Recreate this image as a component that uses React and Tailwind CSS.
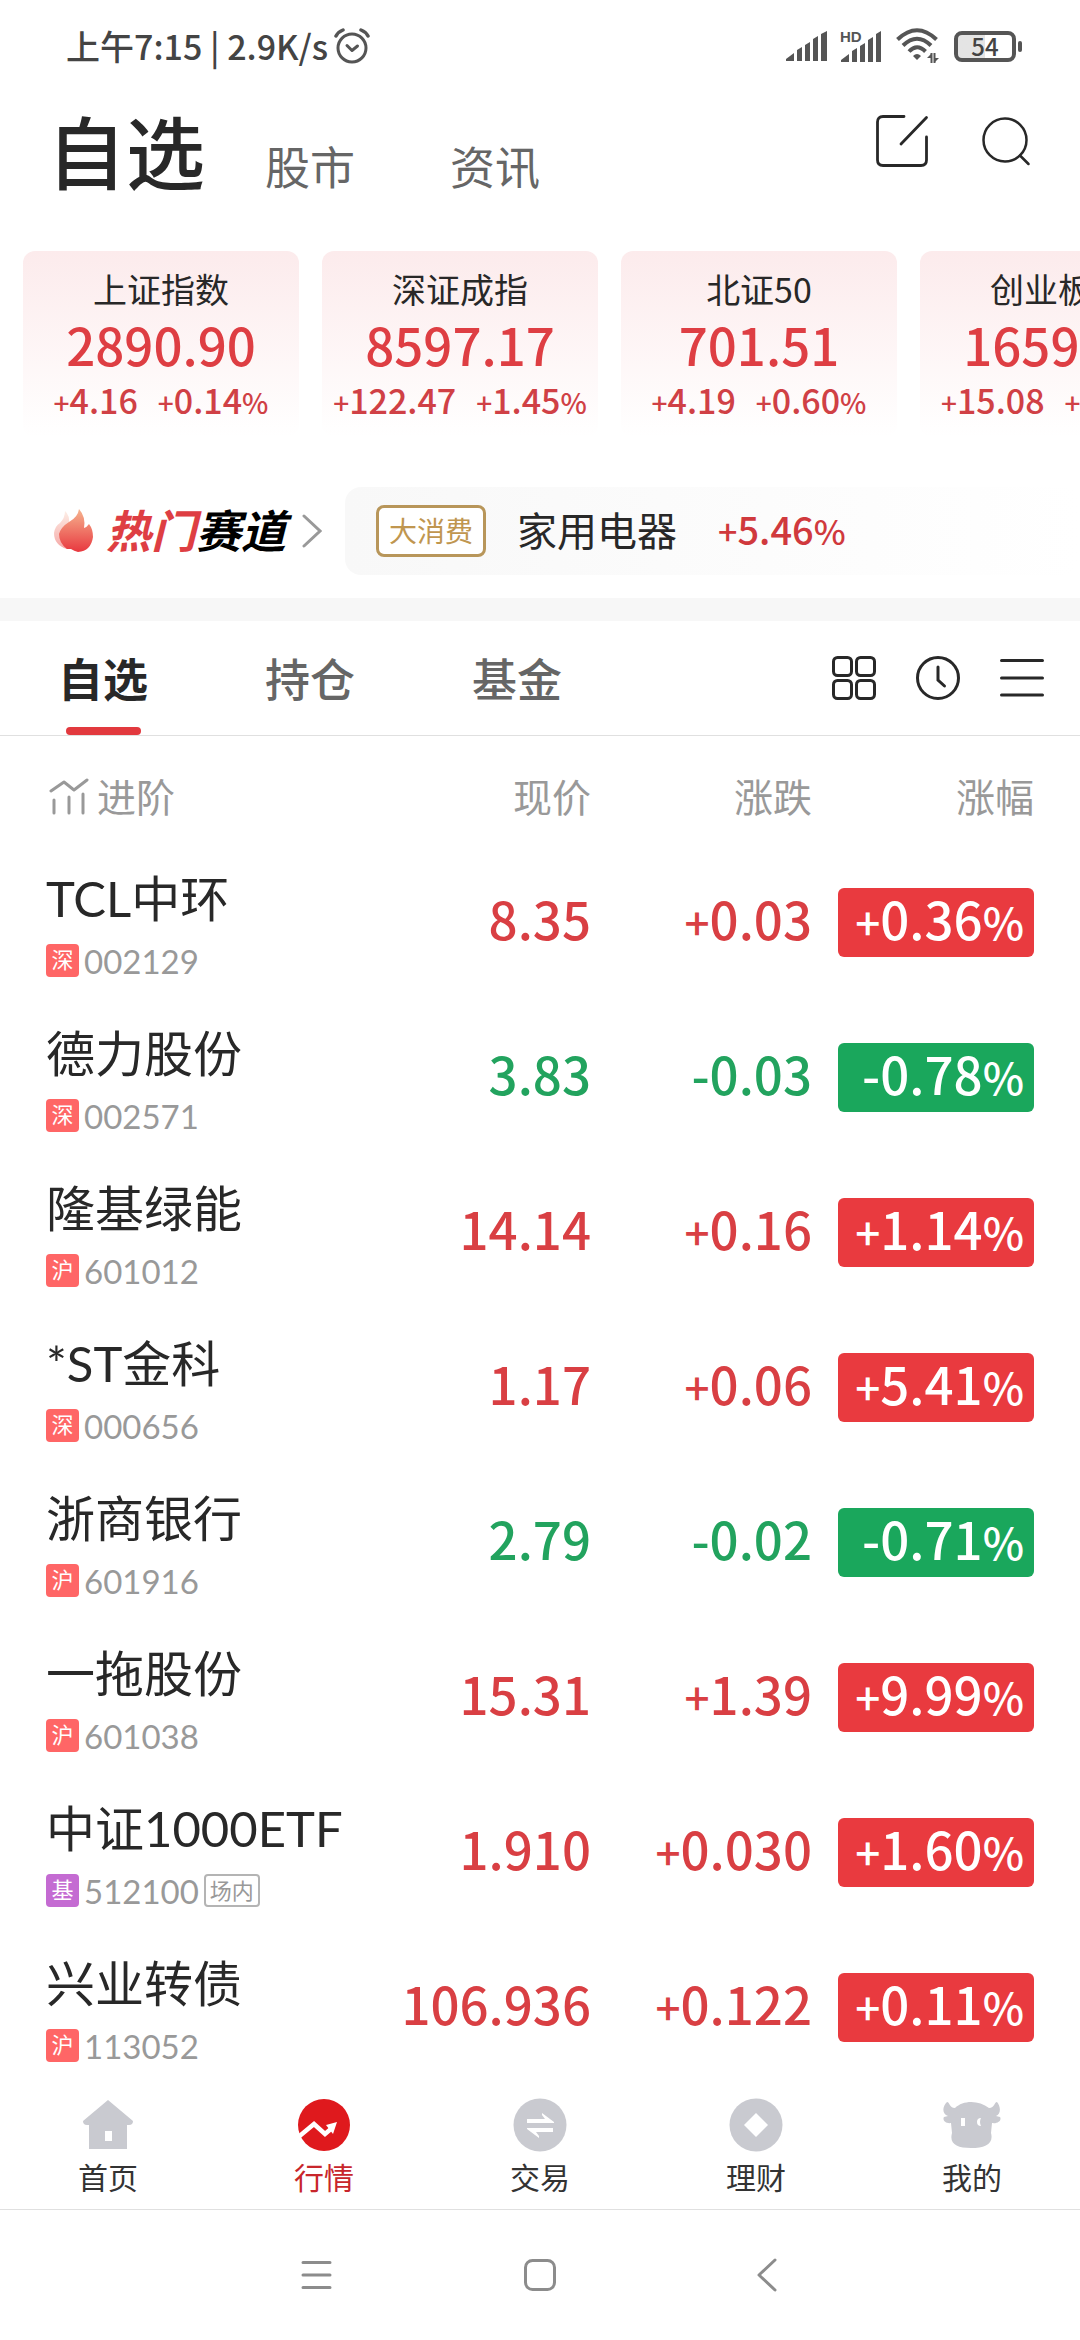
const indices = [
  { name: "上证指数", price: "2890.90", change: "+4.16", pct: "+0.14%" },
  { name: "深证成指", price: "8597.17", change: "+122.47", pct: "+1.45%" },
  { name: "北证50", price: "701.51", change: "+4.19", pct: "+0.60%" },
  { name: "创业板指", price: "1659.21", change: "+15.08", pct: "+0.92%" },
];

const stocks = [
  { name: "TCL中环", market: "深", code: "002129", price: "8.35", change: "+0.03", pct: "+0.36%" },
  { name: "德力股份", market: "深", code: "002571", price: "3.83", change: "-0.03", pct: "-0.78%" },
  { name: "隆基绿能", market: "沪", code: "601012", price: "14.14", change: "+0.16", pct: "+1.14%" },
  { name: "*ST金科", market: "深", code: "000656", price: "1.17", change: "+0.06", pct: "+5.41%" },
  { name: "浙商银行", market: "沪", code: "601916", price: "2.79", change: "-0.02", pct: "-0.71%" },
  { name: "一拖股份", market: "沪", code: "601038", price: "15.31", change: "+1.39", pct: "+9.99%" },
  { name: "中证1000ETF", market: "基", code: "512100", tag: "场内", price: "1.910", change: "+0.030", pct: "+1.60%" },
  { name: "兴业转债", market: "沪", code: "113052", price: "106.936", change: "+0.122", pct: "+0.11%" },
];

/* Draws the sign and the percent mark a step smaller than the digits. */
function Figure({ value, small }) {
  const sign = value.startsWith("+") ? "+" : "";
  const percent = value.endsWith("%") ? "%" : "";
  const digits = value.replace("+", "").replace("%", "");
  return (
    <>
      {sign && <span className={small}>{sign}</span>}
      {digits}
      {percent && <span className={small}>{percent}</span>}
    </>
  );
}

function StatusBar() {
  return (
    <div className="flex h-24 items-center justify-between pr-[58px] pb-1 pl-[66px] text-[#444]">
      <div className="flex items-center gap-[6px] text-[34px] leading-none font-medium [font-family:'Noto_Sans_CJK_SC',sans-serif]">
        <span>上午7:15 | 2.9K/s</span>
        <svg width="36" height="36" viewBox="0 0 36 36" fill="none" stroke="#555" strokeWidth="3" strokeLinecap="round" strokeLinejoin="round">
          <circle cx="18" cy="20" r="14" />
          <path d="M13 17.500l5 5 5.500-4.500" />
          <path d="M2 8q2-4 7-6M34 8q-2-4-7-6" strokeWidth="3.500" />
        </svg>
      </div>
      <div className="flex items-center">
        <svg width="42" height="30" viewBox="0 0 42 30" fill="#555">
          <path d="M0 30v-2l8-6v8zM11 30V19l5-3v14zM19 30V14l5-3v19zM27 30V8l5-3v25zM35 30V3l6-3v30z" />
        </svg>
        <svg className="ml-3 overflow-visible" width="42" height="32" viewBox="0 0 42 32" fill="#555">
          <path d="M1 32v-2l8-6v8zM12 32V21l5-3v14zM20 32V16l5-3v19zM28 32V10l5-3v25zM36 32V4l5-3v31z" />
          <text x="0" y="12" fontSize="15" fontWeight="bold" fontFamily="Liberation Sans">HD</text>
        </svg>
        <svg className="ml-[14px]" width="46" height="36" viewBox="0 0 46 36" fill="none" stroke="#555" strokeWidth="4">
          <path d="M1.500 11.500Q21 -7 40.500 11.500M7 17.500Q21 4 35 17.500M13 23.500Q21 15 29.500 23.500" />
          <path d="M17 28q4-4 8 0l-4 4z" fill="#555" stroke="none" />
          <path d="M35.500 25v10M38.500 25v10" strokeWidth="2" />
          <path d="M31 30l4-4v4zM43 30l-4 4v-4z" fill="#555" stroke="none" />
        </svg>
        <div className="ml-3 flex items-center gap-[2px]">
          <div className="flex h-[31px] w-[62px] items-center justify-center rounded-[8px] border-4 border-[#555] bg-linear-to-r from-[#e4e4e4] from-50% to-white to-50% text-[24px] leading-none font-medium [font-family:'Noto_Sans_CJK_SC',sans-serif]">
            54
          </div>
          <div className="h-[11px] w-1 rounded-sm bg-[#555]" />
        </div>
      </div>
    </div>
  );
}

function Header() {
  return (
    <header className="flex h-[155px] items-start justify-between pr-[49px] pl-[47px]">
      <nav className="flex items-end">
        <button className="text-[79px] leading-[116px] font-medium text-[#282828]">自选</button>
        <button className="ml-[60px] text-[45px] leading-[88px] text-[#666]">股市</button>
        <button className="ml-[95px] text-[45px] leading-[88px] text-[#666]">资讯</button>
      </nav>
      <div className="mt-[18px] flex items-center gap-[52px]">
        <button aria-label="编辑">
          <svg width="54" height="54" viewBox="0 0 54 54" fill="none" stroke="#282828" strokeWidth="2.800" strokeLinecap="round">
            <path d="M29 2.500H8Q2.500 2.500 2.500 8V46Q2.500 51.500 8 51.500H46Q51.500 51.500 51.500 46V23" />
            <path d="M26 30L51.500 3.500" />
          </svg>
        </button>
        <button aria-label="搜索">
          <svg width="50" height="50" viewBox="0 0 50 50" fill="none" stroke="#282828" strokeWidth="2.500" strokeLinecap="round">
            <circle cx="24" cy="24" r="21.500" />
            <path d="M39 39.500l8.500 8.500" />
          </svg>
        </button>
      </div>
    </header>
  );
}

function IndexStrip() {
  return (
    <section className="flex gap-[23px] overflow-x-auto pl-[23px] [scrollbar-width:none]">
      {indices.map((item) => (
        <article
          key={item.name}
          className="flex h-[186px] w-[276px] shrink-0 flex-col items-center rounded-xl bg-linear-to-b from-[#fcebec] to-white pt-4 font-medium whitespace-nowrap [font-family:'Noto_Sans_CJK_SC',sans-serif]"
        >
          <h2 className="text-[34px] leading-[44px] font-normal text-[#282828]">{item.name}</h2>
          <p className="mb-[2px] text-[51px] leading-[67px] text-[#de3e43]">{item.price}</p>
          <p className="flex gap-5 text-[34px] leading-[40px] text-[#d04045]">
            <span><Figure value={item.change} small="text-[28px] leading-none" /></span>
            <span><Figure value={item.pct} small="text-[28px] leading-none" /></span>
          </p>
        </article>
      ))}
    </section>
  );
}

function HotTrack() {
  return (
    <section className="mt-[50px] flex items-center pb-[23px] pl-[52px]">
      <a href="#hot" className="flex items-center">
        <svg width="42" height="44" viewBox="0 0 42 44">
          <defs>
            <linearGradient id="flame" x1="0" y1="0" x2="0" y2="1">
              <stop offset="0" stopColor="#f6b48f" />
              <stop offset="1" stopColor="#e8383f" />
            </linearGradient>
            <linearGradient id="flameBack" x1="0" y1="0" x2="0" y2="1">
              <stop offset="0" stopColor="#fdeee6" />
              <stop offset="1" stopColor="#f5a8a6" />
            </linearGradient>
          </defs>
          <path d="M13 2Q18 6 17 16L15 40Q2 36 2 24Q3 17 8 14Q13 9 13 2Z" fill="url(#flameBack)" />
          <path d="M27 0Q34 8 32 19Q35 18 37 15Q41 20 41 28Q39 42 26 43Q22 42 19 40L15 40Q7 34 7 25Q9 18 17 13Q26 8 27 0Z" fill="url(#flame)" />
        </svg>
        <strong className="ml-3 text-[45px] leading-[60px] font-bold text-[#de3e43] italic">
          热门<span className="text-black">赛道</span>
        </strong>
        <svg className="ml-4" width="20" height="34" viewBox="0 0 20 34" fill="none" stroke="#999" strokeWidth="3" strokeLinecap="round">
          <path d="M2 2l16 15L2 32" />
        </svg>
      </a>
      <a
        href="#appliances"
        className="ml-[23px] flex h-[88px] flex-1 items-center rounded-2xl bg-linear-to-r from-[#f8f8f8] to-white pl-[31px]"
      >
        <span className="rounded-[8px] border-3 border-[#b8965a] bg-white px-[10px] text-[28px] leading-[46px] text-[#c0964f]">大消费</span>
        <span className="ml-[31px] text-[40px] leading-none text-[#282828]">家用电器</span>
        <span className="ml-[41px] pb-1 text-[38px] leading-none font-medium text-[#d0393d] [font-family:'Noto_Sans_CJK_SC',sans-serif]">
          <Figure value="+5.46%" small="text-[34px]" />
        </span>
      </a>
    </section>
  );
}

function ListTabs() {
  return (
    <div className="flex h-[115px] items-center justify-between border-b border-[#e0e0e0] pr-[35px] pl-[58px]">
      <div className="flex h-full gap-[117px] text-[45px] font-medium text-[#666]">
        <button className="flex h-full flex-col items-center font-bold text-[#282828]">
          <span className="min-h-0 flex-1 leading-[119px]">自选</span>
          <span className="h-2 w-[75px] rounded-full bg-[#e2393e]" />
        </button>
        <button className="leading-[119px]">持仓</button>
        <button className="leading-[119px]">基金</button>
      </div>
      <div className="flex items-center gap-[38px]">
        <button aria-label="宫格">
          <svg width="46" height="46" viewBox="0 0 46 46" fill="none" stroke="#282828" strokeWidth="3">
            <rect x="2.500" y="2.500" width="18" height="18" rx="4" />
            <rect x="25.500" y="2.500" width="18" height="18" rx="4" />
            <rect x="2.500" y="25.500" width="18" height="18" rx="4" />
            <rect x="25.500" y="25.500" width="18" height="18" rx="4" />
          </svg>
        </button>
        <button aria-label="历史">
          <svg width="46" height="46" viewBox="0 0 46 46" fill="none" stroke="#282828" strokeWidth="3" strokeLinecap="round">
            <circle cx="23" cy="23" r="20.500" />
            <path d="M23 12v13l6.500 6" />
          </svg>
        </button>
        <button aria-label="菜单">
          <svg width="46" height="46" viewBox="0 0 46 46" fill="none" stroke="#282828" strokeWidth="3" strokeLinecap="round">
            <path d="M2.500 5.500h41M2.500 23h41M2.500 40h41" />
          </svg>
        </button>
      </div>
    </div>
  );
}

function StockRow({ stock }) {
  const down = stock.change.startsWith("-");
  const tone = down ? "text-[#22a35e]" : "text-[#d93f43]";
  return (
    <tr className="h-[155px] text-[51px] leading-[61px] font-medium [font-family:'Noto_Sans_CJK_SC',sans-serif]">
      <th scope="row" className="p-0 text-left font-normal [font-family:Lato,'Noto_Sans_CJK_SC',sans-serif]">
        <div className="text-[49px] leading-[64px] whitespace-nowrap text-[#282828]">{stock.name}</div>
        <div className="mt-[14px] mb-[2px] flex items-center gap-[5px]">
          <span
            className={
              stock.market === "基"
                ? "size-[33px] rounded-[4px] bg-[#c46bd2] text-center text-[22px] leading-[32px] text-white"
                : "size-[33px] rounded-[4px] bg-[#ff6666] text-center text-[22px] leading-[32px] text-white"
            }
          >
            {stock.market}
          </span>
          <span className="text-[33px] leading-[34px] text-[#999]">{stock.code}</span>
          {stock.tag && (
            <span className="rounded-[4px] border-2 border-[#b4b4b4] px-1 text-[22px] leading-[29px] text-[#999]">{stock.tag}</span>
          )}
        </div>
      </th>
      <td className={`px-0 pt-0 pb-2 text-right ${tone}`}>{stock.price}</td>
      <td className={`px-0 pt-0 pb-2 text-right ${tone}`}>
        <Figure value={stock.change} small="text-[44px] leading-none" />
      </td>
      <td className="p-0">
        <div
          className={
            down
              ? "ml-auto w-[196px] rounded-[6px] bg-[#1aa75c] pr-[10px] pb-2 text-right text-white"
              : "ml-auto w-[196px] rounded-[6px] bg-[#e93a3f] pr-[10px] pb-2 text-right text-white"
          }
        >
          <Figure value={stock.pct} small="text-[44px] leading-none" />
        </div>
      </td>
    </tr>
  );
}

function StockTable() {
  return (
    <div className="px-[46px]">
      <table className="w-full table-fixed border-collapse">
        <colgroup>
          <col />
          <col className="w-[218px]" />
          <col className="w-[221px]" />
          <col className="w-[222px]" />
        </colgroup>
        <thead>
          <tr className="h-[109px] text-[39px] leading-[44px] text-[#999]">
            <th scope="col" className="px-0 pt-3 pb-0 text-left font-normal">
              <button className="flex items-center gap-2">
                <svg className="ml-[3px]" width="40" height="40" viewBox="0 0 40 40" fill="none" stroke="#999" strokeWidth="3" strokeLinecap="round" strokeLinejoin="round">
                  <path d="M2 14L15 5l10 8L38 3M5 23v13M20 20v16M34 17v19" />
                </svg>
                进阶
              </button>
            </th>
            <th scope="col" className="px-0 pt-3 pb-0 text-right font-normal">现价</th>
            <th scope="col" className="px-0 pt-3 pb-0 text-right font-normal">涨跌</th>
            <th scope="col" className="px-0 pt-3 pb-0 text-right font-normal">涨幅</th>
          </tr>
        </thead>
        <tbody>
          {stocks.map((stock) => (
            <StockRow key={stock.code} stock={stock} />
          ))}
        </tbody>
      </table>
    </div>
  );
}

const navItems = [
  {
    label: "首页",
    icon: (
      <svg width="54" height="54" viewBox="0 0 54 54">
        <path d="M27 2L52 23q0 4-4 4h-2v24H8V27H6q-4 0-4-4z" fill="#c9cad0" />
        <rect x="24" y="33" width="7" height="10" fill="#fff" />
      </svg>
    ),
  },
  {
    label: "行情",
    active: true,
    icon: (
      <svg width="54" height="54" viewBox="0 0 54 54">
        <circle cx="27" cy="27" r="26" fill="#df191d" />
        <path d="M0 38.500H2L17 26l11 10 7-6" fill="none" stroke="#fff" strokeWidth="4.500" />
        <path d="M29 27l11-3-4 12z" fill="#fff" />
      </svg>
    ),
  },
  {
    label: "交易",
    icon: (
      <svg width="54" height="54" viewBox="0 0 54 54">
        <circle cx="27" cy="27" r="26.500" fill="#c9cad0" />
        <path d="M14 21h18l-3-4v-2l12 9v1H14zM40 30H14v1l12 9v-2l-3-4h17z" fill="#fff" />
      </svg>
    ),
  },
  {
    label: "理财",
    icon: (
      <svg width="54" height="54" viewBox="0 0 54 54">
        <circle cx="27" cy="27" r="26.500" fill="#c9cad0" />
        <path d="M27 15l12 12-12 12-12-12z" fill="#fff" />
      </svg>
    ),
  },
  {
    label: "我的",
    icon: (
      <svg width="58" height="54" viewBox="0 -4 58 54">
        <path d="M4 0C-1 5-1 12 5 14L1 15C-1 18 3 22 8 21L9 31C6 42 14 46 28 46C42 46 51 42 48 31L49 21C55 22 59 18 57 15L53 14C58 12 58 5 54 0C51 0 52 6 46 6C36-2 20-2 12 6C6 6 7 0 4 0Z" fill="#c9cad0" />
        <path d="M18 16h4v8h-4zM38 16q-4 0-4 4t4 4q-2-4 0-8z" fill="#fff" />
      </svg>
    ),
  },
];

function BottomNav() {
  return (
    <nav className="grid grid-cols-5 border-b border-[#e0e0e0] bg-white pt-[13px] pb-[10px]">
      {navItems.map((item) => (
        <button key={item.label} className="flex flex-col items-center">
          {item.icon}
          <span
            className={
              item.active
                ? "mt-[3px] text-[30px] leading-[44px] text-[#c8262b]"
                : "mt-[3px] text-[30px] leading-[44px] text-[#333]"
            }
          >
            {item.label}
          </span>
        </button>
      ))}
    </nav>
  );
}

function SystemNav() {
  return (
    <div className="flex flex-1 items-center justify-center gap-[190px]">
      <button aria-label="最近任务">
        <svg width="34" height="34" viewBox="0 0 34 34" fill="none" stroke="#8c8c8c" strokeWidth="3" strokeLinecap="round">
          <path d="M4 4.500h27M4 17h27M4 29.500h27" />
        </svg>
      </button>
      <button aria-label="主屏幕">
        <svg width="34" height="34" viewBox="0 0 34 34" fill="none" stroke="#8c8c8c" strokeWidth="3">
          <rect x="2.500" y="2.500" width="29" height="29" rx="7" />
        </svg>
      </button>
      <button aria-label="返回">
        <svg width="34" height="34" viewBox="0 0 34 34" fill="none" stroke="#8c8c8c" strokeWidth="3" strokeLinecap="round" strokeLinejoin="round">
          <path d="M28 2L12 17l16 15" />
        </svg>
      </button>
    </div>
  );
}

export default function App() {
  return (
    <div className="flex min-h-screen flex-col overflow-hidden bg-white [font-family:Lato,'Noto_Sans_CJK_SC',sans-serif]" lang="zh-CN">
      <StatusBar />
      <Header />
      <IndexStrip />
      <HotTrack />
      <div className="h-[23px] bg-[#f7f7f7]" />
      <main>
        <ListTabs />
        <StockTable />
      </main>
      <BottomNav />
      <SystemNav />
    </div>
  );
}
